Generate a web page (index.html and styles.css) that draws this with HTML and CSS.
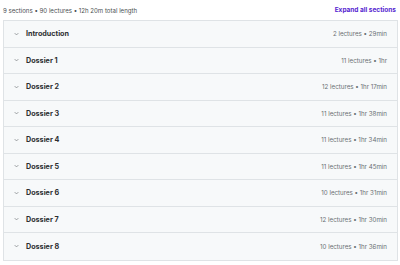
FILE: index.html
```html
<!DOCTYPE html>
<html>
<head>
    <meta charset="UTF-8">
    <title>Course content</title>
    <link rel="stylesheet" href="styles.css">
</head>
<body>
    <div class="summary">
        <span>9 sections • 90 lectures • 12h 20m total length</span>
        <button class="expand">Expand all sections</button>
    </div>
    <div class="sections">
        <div class="section"><svg class="chev" viewBox="0 0 8 5"><path d="M1 1l3 3 3-3"/></svg><span class="title">Introduction</span><span class="meta">2 lectures • 29min</span></div>
        <div class="section"><svg class="chev" viewBox="0 0 8 5"><path d="M1 1l3 3 3-3"/></svg><span class="title">Dossier 1</span><span class="meta">11 lectures • 1hr</span></div>
        <div class="section"><svg class="chev" viewBox="0 0 8 5"><path d="M1 1l3 3 3-3"/></svg><span class="title">Dossier 2</span><span class="meta">12 lectures • 1hr 17min</span></div>
        <div class="section"><svg class="chev" viewBox="0 0 8 5"><path d="M1 1l3 3 3-3"/></svg><span class="title">Dossier 3</span><span class="meta">11 lectures • 1hr 38min</span></div>
        <div class="section"><svg class="chev" viewBox="0 0 8 5"><path d="M1 1l3 3 3-3"/></svg><span class="title">Dossier 4</span><span class="meta">11 lectures • 1hr 34min</span></div>
        <div class="section"><svg class="chev" viewBox="0 0 8 5"><path d="M1 1l3 3 3-3"/></svg><span class="title">Dossier 5</span><span class="meta">11 lectures • 1hr 45min</span></div>
        <div class="section"><svg class="chev" viewBox="0 0 8 5"><path d="M1 1l3 3 3-3"/></svg><span class="title">Dossier 6</span><span class="meta">10 lectures • 1hr 31min</span></div>
        <div class="section"><svg class="chev" viewBox="0 0 8 5"><path d="M1 1l3 3 3-3"/></svg><span class="title">Dossier 7</span><span class="meta">12 lectures • 1hr 30min</span></div>
        <div class="section"><svg class="chev" viewBox="0 0 8 5"><path d="M1 1l3 3 3-3"/></svg><span class="title">Dossier 8</span><span class="meta">10 lectures • 1hr 36min</span></div>
    </div>
</body>
</html>
```

FILE: styles.css
```css
body {
    margin: 0;
    padding: 0 3px;
    font-family: "Inter", "Liberation Sans", sans-serif;
    color: #2d2f31;
    background: #fff;
}

.summary {
    display: flex;
    justify-content: space-between;
    align-items: center;
    height: 20px;
    font-size: 6.1px;
    color: #4b4f52;
}

.expand {
    background: none;
    border: none;
    padding: 0 1px 0 0;
    font-family: inherit;
    font-size: 6.5px;
    font-weight: 700;
    color: #5624d0;
    cursor: pointer;
}

.sections {
    border: 1px solid #dfe3e6;
    width: 393px;
}

.section {
    display: flex;
    align-items: center;
    height: 26.5px;
    padding: 0 10px;
    background: #f7f9fa;
    border-bottom: 1px solid #dfe3e6;
    box-sizing: border-box;
}

.section:last-child {
    border-bottom: none;
}

.chev {
    width: 5px;
    height: 4px;
    margin-right: 7px;
    fill: none;
    stroke: #6a6f73;
    stroke-width: 1;
}

.title {
    flex: 1;
    font-size: 7.2px;
    font-weight: 700;
}

.meta {
    font-size: 6.2px;
    color: #6a6f73;
}
```
